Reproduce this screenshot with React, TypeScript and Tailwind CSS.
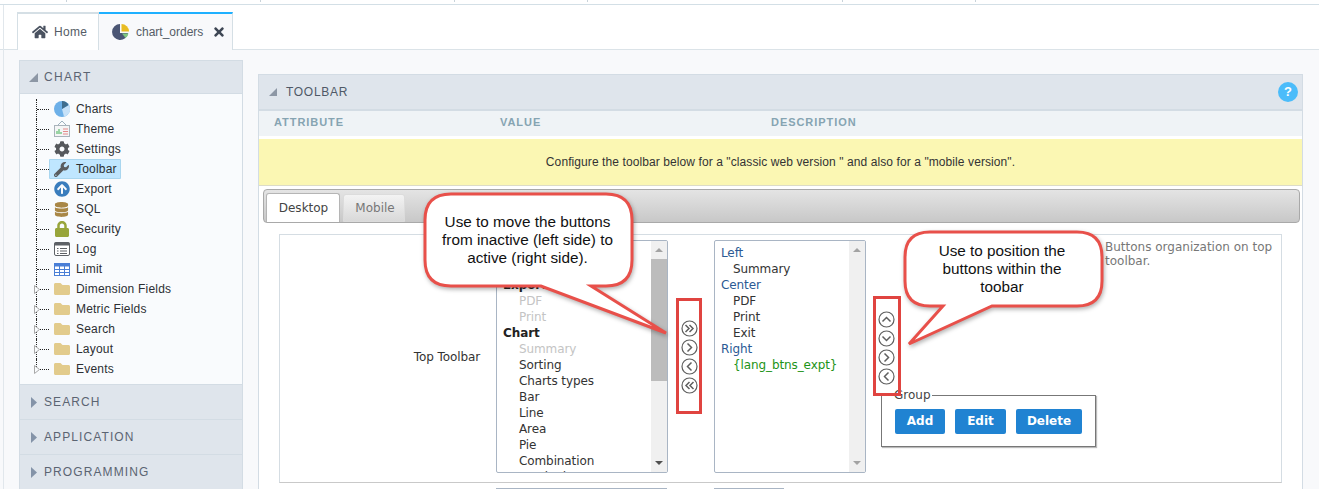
import React from "react";
import { FaHome, FaTimes, FaCog, FaWrench, FaArrowCircleUp, FaDatabase, FaLock, FaFolder } from "react-icons/fa";

const ui = "font-['Liberation_Sans',Arial,sans-serif]";
const dv = "font-['DejaVu_Sans',sans-serif]";

function PieTab() {
  return (
    <svg width="18" height="18" viewBox="0 0 18 18">
      <path d="M8 1a8 8 0 1 0 8 9H8z" fill="#4b5674" />
      <path d="M9.500 1a7.500 7.500 0 0 1 7.500 7.500H9.500z" fill="#e8bc22" />
      <path d="M10 10.500h6.500a7 7 0 0 1-3 4.500z" fill="#7fc77f" />
    </svg>
  );
}
function PieCharts() {
  return (
    <svg width="16" height="16" viewBox="0 0 16 16">
      <circle cx="8" cy="8" r="8" fill="#6db0e8" />
      <path d="M8 8 15 4a8 8 0 0 1-5 11.800z" fill="#c6e1f8" />
      <path d="M8 8V0a8 8 0 0 1 6.500 4z" fill="#3f6d8e" />
    </svg>
  );
}
function ThemeIcon() {
  return (
    <svg width="16" height="17" viewBox="0 0 16 17">
      <path d="M8 0 4 4M8 0l4 4" stroke="#9db0bd" fill="none" />
      <rect x="0.500" y="4.500" width="15" height="11" fill="#f4f5f6" stroke="#a9b3bb" />
      <path d="M3 13V10M5 13V8M7 13v-2" stroke="#7cc98a" strokeWidth="1.500" />
      <path d="M9 8h5M9 10.500h5M9 13h5" stroke="#e58a8a" />
    </svg>
  );
}
function LogIcon() {
  return (
    <svg width="16" height="14" viewBox="0 0 16 14">
      <rect x="0.500" y="0.500" width="15" height="13" rx="1.500" fill="#fff" stroke="#5d6166" />
      <rect x="0.500" y="0.500" width="15" height="3" fill="#5d6166" />
      <path d="M3 6.500h1.500M6 6.500h7M3 9h1.500M6 9h7M3 11.500h1.500M6 11.500h7" stroke="#5d6166" />
    </svg>
  );
}
function TableIcon() {
  return (
    <svg width="16" height="13" viewBox="0 0 16 13">
      <rect x="0.500" y="0.500" width="15" height="12" fill="#fff" stroke="#4a7fd6" />
      <rect x="0.500" y="0.500" width="15" height="3" fill="#4a7fd6" />
      <path d="M5.500 3v10M10.500 3v10M0 6.500h16M0 9.500h16" stroke="#4a7fd6" />
    </svg>
  );
}

type Row = { label: string; icon: React.ReactNode; folder?: boolean; active?: boolean };
const folder = <FaFolder size={16} color="#e2cb8c" />;
const rows: Row[] = [
  { label: "Charts", icon: <PieCharts /> },
  { label: "Theme", icon: <ThemeIcon /> },
  { label: "Settings", icon: <FaCog size={16} color="#55585c" /> },
  { label: "Toolbar", icon: <FaWrench size={15} color="#5a5d60" />, active: true },
  { label: "Export", icon: <FaArrowCircleUp size={16} color="#3a7dbd" /> },
  { label: "SQL", icon: <FaDatabase size={15} color="#a98746" /> },
  { label: "Security", icon: <FaLock size={16} color="#98a53b" /> },
  { label: "Log", icon: <LogIcon /> },
  { label: "Limit", icon: <TableIcon /> },
  { label: "Dimension Fields", icon: folder, folder: true },
  { label: "Metric Fields", icon: folder, folder: true },
  { label: "Search", icon: folder, folder: true },
  { label: "Layout", icon: folder, folder: true },
  { label: "Events", icon: folder, folder: true },
];

function TreeRow({ row, last }: { row: Row; last: boolean }) {
  return (
    <div className="relative flex items-center h-5 ml-4 pl-px">
      <div className={`absolute left-0 top-0 border-l border-dotted border-[#222] ${last ? "h-[12px]" : "h-5"}`} />
      <div className="w-3 border-b border-dotted border-[#222]" />
      {row.folder && (
        <svg className="absolute -left-[2px] top-[6px]" width="6" height="9" viewBox="0 0 6 9">
          <path d="M.5.500 5.500 4.500.5 8.500z" fill="#f9fbfd" stroke="#a9a9a9" />
        </svg>
      )}
      <div
        className={`absolute left-[13px] flex items-center h-5 ${row.active ? "w-[72px] bg-[#bfe6ff] outline outline-[#a9d6ef] -outline-offset-1 rounded-[1px]" : "w-[180px]"}`}
      >
        <span className="w-[27px] pl-[5px] flex items-center justify-start">{row.icon}</span>
        <span className={`text-[12px] tracking-[0.2px] text-[#2c2f33] whitespace-nowrap ${ui}`}>{row.label}</span>
      </div>
    </div>
  );
}

function CollapsedHeader({ label }: { label: string }) {
  return (
    <div className="flex items-center h-[35px] pl-[11px] bg-[#dfe5ec] border-b border-[#d3dce4]">
      <svg width="6" height="11" viewBox="0 0 6 11" className="mr-[7px]">
        <path d="M0 0 6 5.500 0 11z" fill="#8493a8" />
      </svg>
      <span className={`text-[12px] tracking-[1.1px] text-[#5b6472] ${ui}`}>{label}</span>
    </div>
  );
}

function Sidebar() {
  return (
    <aside className="w-[224px] shrink-0 border-x border-[#d3dce4] bg-[#f9fbfd]">
      <div className="flex items-center h-[34px] pl-[9px] bg-[#dfe5ec] border border-[#d3dce4] -mx-px">
        <svg width="9" height="9" viewBox="0 0 9 9" className="mr-[6px]">
          <path d="M9 0V9H0z" fill="#8d97a5" />
        </svg>
        <span className={`text-[12px] tracking-[1.3px] text-[#5b6472] ${ui}`}>CHART</span>
      </div>
      <div className="pt-[5px] h-[291px] border-b border-[#d3dce4]">
        {rows.map((r, i) => (
          <TreeRow key={r.label} row={r} last={i === rows.length - 1} />
        ))}
      </div>
      <CollapsedHeader label="SEARCH" />
      <CollapsedHeader label="APPLICATION" />
      <CollapsedHeader label="PROGRAMMING" />
    </aside>
  );
}

function Option({ text, kind }: { text: string; kind: "group" | "off" | "on" | "head" | "green" | "sub" }) {
  const cls = {
    group: "pl-[6px] font-bold text-[#222]",
    off: "pl-[22px] text-[#c4c4c4]",
    on: "pl-[22px] text-[#333]",
    head: "pl-[6px] text-[#2b5a94]",
    sub: "pl-[18px] text-[#333]",
    green: "pl-[18px] text-[#1d9417]",
  }[kind];
  return <div className={`h-4 leading-4 whitespace-nowrap tracking-[-0.1px] ${cls}`}>{text}</div>;
}

function Scrollbar({ thumb }: { thumb: boolean }) {
  return (
    <div className="relative w-[16px] shrink-0 h-full bg-[#f0f0f0] flex flex-col items-center justify-between py-[7px]">
      <svg width="8" height="4" viewBox="0 0 8 4"><path d="M4 0 8 4H0z" fill="#a3a3a3" /></svg>
      {thumb && <div className="absolute left-0 right-0 top-[18px] h-[122px] bg-[#bcbcbc]" />}
      <svg width="8" height="4" viewBox="0 0 8 4"><path d="M4 4 8 0H0z" fill={thumb ? "#505050" : "#a3a3a3"} /></svg>
    </div>
  );
}

function ListBox({ width, thumb, children }: { width: string; thumb: boolean; children: React.ReactNode }) {
  return (
    <div className={`flex h-[233px] shrink-0 border border-[#a9b5c4] rounded-[2px] bg-white overflow-hidden ${width}`}>
      <div className={`flex-1 pt-[4px] overflow-hidden text-[12px] ${dv}`}>{children}</div>
      <Scrollbar thumb={thumb} />
    </div>
  );
}

function RoundBtn({ d }: { d: string }) {
  return (
    <svg width="17" height="17" viewBox="0 0 17 17">
      <circle cx="8.500" cy="8.500" r="7.500" fill="#fff" stroke="#5f5f5f" strokeWidth="1.200" />
      <path d={d} fill="none" stroke="#5f5f5f" strokeWidth="1.500" />
    </svg>
  );
}
const up = "M4.500 10.500 8.500 6.500 12.500 10.500";
const down = "M4.500 6.500 8.500 10.500 12.500 6.500";
const right = "M6.500 4.500 10.500 8.500 6.500 12.500";
const left = "M10.500 4.500 6.500 8.500 10.500 12.500";
const rr = "M4.500 5 8 8.500 4.500 12M8.500 5 12 8.500 8.500 12";
const ll = "M8.500 5 5 8.500 8.500 12M12.500 5 9 8.500 12.500 12";

function BlueBtn({ label, w }: { label: string; w: string }) {
  return (
    <button className={`h-[25px] ${w} rounded-[2px] bg-[#2083d2] text-white text-[12px] font-bold ${dv}`}>{label}</button>
  );
}

function Overlays() {
  const red = "#e8504a";
  return (
    <>
      <svg className="absolute left-0 top-0 pointer-events-none drop-shadow-[1px_2px_2px_rgba(0,0,0,0.3)]" width="1319" height="489">
        <path
          d="M451 194H606Q632 194 632 220V260Q632 286 606 286H591L666 333 541 286H451Q425 286 425 260V220Q425 194 451 194Z"
          fill="#fff"
          stroke={red}
          strokeWidth="3"
        />
        <path
          d="M930 232H1077Q1102 232 1102 257V281Q1102 306 1077 306H992L909 344 943 306H930Q905 306 905 281V257Q905 232 930 232Z"
          fill="#fff"
          stroke={red}
          strokeWidth="3"
        />
      </svg>
      <div className="absolute left-[676px] top-[298px] w-[26px] h-[116px] border-[3px] border-[#e04440]" />
      <div className="absolute left-[873px] top-[296px] w-[28px] h-[100px] border-[3px] border-[#e04440]" />
      <div className="absolute left-[424px] top-[213px] w-[207px] text-center text-[15.300px] leading-[18px] text-[#111] font-['Liberation_Sans',sans-serif]">
        Use to move the buttons
        <br />
        from inactive (left side) to
        <br />
        active (right side).
      </div>
      <div className="absolute left-[904px] top-[242px] w-[196px] text-center text-[15.300px] leading-[18px] text-[#111] font-['Liberation_Sans',sans-serif]">
        Use to position the
        <br />
        buttons within the
        <br />
        toobar
      </div>
    </>
  );
}

function MainPanel() {
  return (
    <section className="w-[1045px] shrink-0 mt-[14px] border-x border-[#d3dce4] bg-white h-[415px] overflow-hidden">
      <div className="flex items-center justify-between h-[37px] pl-[10px] pr-[4px] bg-[#dfe5ec] border-t border-b-2 border-[#d3dce4]">
        <div className="flex items-center">
          <svg width="8" height="8" viewBox="0 0 8 8" className="mr-[9px]">
            <path d="M8 0V8H0z" fill="#8d97a5" />
          </svg>
          <span className={`text-[12px] tracking-[0.7px] text-[#4f5967] ${ui}`}>TOOLBAR</span>
        </div>
        <div className="w-5 h-5 rounded-full bg-[#4bbcfa] flex items-center justify-center text-white text-[13px] font-bold font-['Liberation_Sans',sans-serif]">?</div>
      </div>
      <div className={`flex items-center h-[25px] pb-[2px] bg-[#eff3f6] text-[11px] tracking-[0.95px] font-bold text-[#86a4b2] ${ui}`}>
        <span className="w-[241px] pl-[15px]">ATTRIBUTE</span>
        <span className="w-[271px]">VALUE</span>
        <span>DESCRIPTION</span>
      </div>
      <div className="h-[3px]" />
      <div className={`flex items-center justify-center h-[47px] bg-[#fbf7b3] border-b border-[#dcdcc8] text-[12px] tracking-[0.09px] text-[#333] ${ui}`}>
        Configure the toolbar below for a "classic web version " and also for a "mobile version".
      </div>
      <div className="pl-[4px] pt-[3px]">
        <div className="flex items-end gap-[3px] w-[1037px] h-[34px] pl-[2px] rounded-[4px] border border-[#a9a9a9] bg-gradient-to-b from-[#e4e4e4] to-[#c8c8c8]">
          <div className={`flex items-center justify-center w-[74px] h-[29px] pl-px rounded-t-[3px] border border-b-0 border-[#b5b5b5] bg-white text-[12px] text-[#444] ${dv}`}>
            Desktop
          </div>
          <div className={`flex items-center justify-center w-[62px] h-[28px] pl-[2px] rounded-t-[3px] border border-[#dcdcdc] bg-gradient-to-b from-[#f3f3f3] to-[#d9d9d9] text-[12px] text-[#777] ${dv}`}>
            Mobile
          </div>
        </div>
        <div className="ml-[16px] mt-[11px] w-[1003px] border border-[#d5dde3] border-b-[#c9c9c9] flex h-[249px]">
          <div className={`w-[210px] shrink-0 flex items-center justify-end pr-[10px] pb-[4px] text-[12px] tracking-[-0.1px] text-[#333] ${dv}`}>
            Top Toolbar
          </div>
          <div className="flex items-start pl-[6px] pt-[5px]">
            <ListBox width="w-[172px]" thumb>
              <div className="h-8" />
              <Option text="Export" kind="group" />
              <Option text="PDF" kind="off" />
              <Option text="Print" kind="off" />
              <Option text="Chart" kind="group" />
              <Option text="Summary" kind="off" />
              <Option text="Sorting" kind="on" />
              <Option text="Charts types" kind="on" />
              <Option text="Bar" kind="on" />
              <Option text="Line" kind="on" />
              <Option text="Area" kind="on" />
              <Option text="Pie" kind="on" />
              <Option text="Combination" kind="on" />
              <Option text="Stacked" kind="on" />
            </ListBox>
            <div className="flex flex-col gap-[2px] w-[46px] pl-[13px] mt-[80px]">
              <RoundBtn d={rr} />
              <RoundBtn d={right} />
              <RoundBtn d={left} />
              <RoundBtn d={ll} />
            </div>
            <ListBox width="w-[152px]" thumb={false}>
              <Option text="Left" kind="head" />
              <Option text="Summary" kind="sub" />
              <Option text="Center" kind="head" />
              <Option text="PDF" kind="sub" />
              <Option text="Print" kind="sub" />
              <Option text="Exit" kind="sub" />
              <Option text="Right" kind="head" />
              <Option text="{lang_btns_expt}" kind="green" />
            </ListBox>
            <div className="w-[239px] shrink-0 pl-[15px]">
              <div className="flex flex-col gap-[2px] -ml-[3px] mt-[71px]">
                <RoundBtn d={up} />
                <RoundBtn d={down} />
                <RoundBtn d={right} />
                <RoundBtn d={left} />
              </div>
              <fieldset className="relative mt-[10px] w-[215px] h-[52px] border border-[#777] shadow-[1px_1px_1px_#bbb] flex items-center gap-[10px] pl-[13px]">
                <legend className={`absolute -top-[9px] left-[12px] bg-white pr-[1px] text-[12px] leading-4 text-[#444] ${dv}`}>Group</legend>
                <BlueBtn label="Add" w="w-[50px]" />
                <BlueBtn label="Edit" w="w-[51px]" />
                <BlueBtn label="Delete" w="w-[66px]" />
              </fieldset>
            </div>
            <div className={`w-[172px] shrink-0 text-[12px] leading-[14px] text-[#777] ${dv}`}>
              Buttons organization on top toolbar.
            </div>
          </div>
        </div>
        <div className="flex ml-[16px] pl-[217px] gap-[47px] mt-[5px]">
          <div className="w-[171px] h-[2px] border-t border-x border-[#a9b5c4]" />
          <div className="w-[70px] h-[2px] border-t border-x border-[#a9b5c4]" />
        </div>
      </div>
    </section>
  );
}

export default function App() {
  const segments = ["w-[67px]", "w-[194px]", "w-[194px]", "w-[133px]", "w-[255px]", "w-[133px]"];
  return (
    <div className="relative w-[1319px] h-[489px] overflow-hidden bg-[#f8f9fb]">
      <div className="flex h-[5px] bg-white border-b border-[#d3dfe6]">
        {segments.map((s, i) => (
          <div key={i} className={`${s} h-[2px] border-r border-[#c9d3da]`} />
        ))}
      </div>
      <div className="flex items-end h-[45px] pl-[17px] bg-white border-b border-[#dbe3e8]">
        <div className={`flex items-center w-[82px] h-[38px] -mb-px pl-[14px] gap-[6px] border-t-2 border-x border-[#d5dfe5] bg-white text-[12px] tracking-[0.3px] text-[#555c66] ${ui}`}>
          <FaHome size={16} color="#4a5260" />
          Home
        </div>
        <div className={`flex items-center w-[134px] h-[38px] -mb-px pl-[13px] border-t-2 border-t-[#1eb0ff] border-r border-[#d5dfe5] bg-[#f8f9fb] text-[12px] text-[#555c66] ${ui}`}>
          <PieTab />
          <span className="ml-[6px] mr-[9px]">chart_orders</span>
          <FaTimes size={14} color="#3e4754" />
        </div>
      </div>
      <div className="flex gap-[15px] pl-[19px] pt-[10px]">
        <Sidebar />
        <MainPanel />
      </div>
      <div className="absolute left-[3px] top-[5px] bottom-0 w-px bg-[#e1e7ec]" />
      <Overlays />
    </div>
  );
}
